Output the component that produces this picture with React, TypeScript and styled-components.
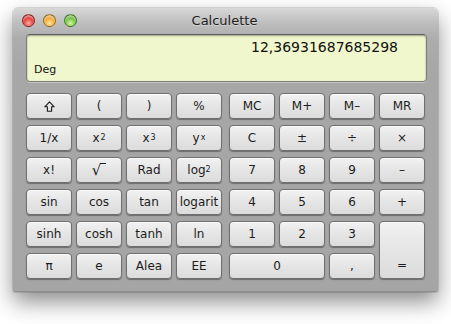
import React from "react";
import styled, { createGlobalStyle, css } from "styled-components";

const Global = createGlobalStyle`
  html, body { margin: 0; padding: 0; background: #ffffff; }
  body { font-family: "DejaVu Sans", "Liberation Sans", sans-serif; }
`;

const Page = styled.div`
  padding: 8px 0 0 13px;
  width: 451px;
  height: 324px;
  box-sizing: border-box;
`;

const Window = styled.div`
  width: 425px;
  height: 284px;
  box-sizing: border-box;
  border-radius: 5px 5px 2px 2px;
  background: linear-gradient(#d8d8d8 0px, #bfbfbf 14px, #adadad 30px, #a7a7a7 60px, #a5a5a5 100%);
  box-shadow: 0 10px 22px rgba(0, 0, 0, 0.45), 0 0 0 1px rgba(0, 0, 0, 0.12);
  border-bottom: 1px solid #8e8e8e;
  display: flex;
  flex-direction: column;
  padding: 0 11px 0 13px;
`;

const TitleBar = styled.div`
  height: 26px;
  display: grid;
  grid-template-columns: 1fr auto 1fr;
  align-items: center;
  margin-left: -4px;
`;

const Lights = styled.div`
  display: flex;
  gap: 8px;
  margin-top: -2px;
`;

const lightColors = {
  red: ["#ffb0a8", "#e0312a", "#a6100b"],
  yellow: ["#ffe7a0", "#f2a62a", "#b8700c"],
  green: ["#d8f7a8", "#66be34", "#3c8318"],
};

const Light = styled.span<{ $c: keyof typeof lightColors }>`
  width: 13px;
  height: 13px;
  border-radius: 50%;
  box-sizing: border-box;
  border: 1px solid rgba(0, 0, 0, 0.35);
  ${({ $c }) => css`
    background: radial-gradient(circle at 50% 75%, ${lightColors[$c][0]} 0%, ${lightColors[$c][1]} 55%, ${lightColors[$c][2]} 100%);
  `}
  box-shadow: inset 0 2px 2px rgba(255, 255, 255, 0.55);
`;

const Title = styled.div`
  font-size: 13px;
  color: #1a1a1a;
  margin-top: -2px;
  text-shadow: 0 1px 0 rgba(255, 255, 255, 0.4);
`;

const Display = styled.div`
  height: 48px;
  box-sizing: border-box;
  width: 401px;
  border-radius: 4px;
  background: #f0f7cc;
  border: 1px solid #7c7c7c;
  border-top-color: #5e5e5e;
  box-shadow: inset 0 1px 2px rgba(0, 0, 0, 0.35), 0 1px 0 rgba(255, 255, 255, 0.35);
  display: flex;
  flex-direction: column;
  justify-content: space-between;
  padding: 3px 28px 4px 7px;
`;

const Value = styled.div`
  align-self: flex-end;
  font-size: 14px;
  color: #111;
  line-height: 18px;
`;

const Mode = styled.div`
  font-size: 11px;
  color: #111;
  line-height: 14px;
`;

const Keypad = styled.div`
  display: flex;
  gap: 7px;
  margin-top: 11px;
`;

const Grid = styled.div`
  display: grid;
  grid-template-columns: repeat(4, 46px);
  grid-template-rows: repeat(6, 26px);
  column-gap: 4px;
  row-gap: 6px;
`;

const Key = styled.div<{ $wide?: boolean; $tall?: boolean }>`
  box-sizing: border-box;
  border: 1px solid #6f6f6f;
  border-radius: 4px;
  background: linear-gradient(#f2f2f2 0%, #e6e6e6 45%, #dcdcdc 100%);
  box-shadow: 0 1px 1px rgba(0, 0, 0, 0.35), inset 0 1px 0 rgba(255, 255, 255, 0.8);
  display: flex;
  align-items: center;
  justify-content: center;
  font-size: 12px;
  color: #1c1c1c;
  white-space: nowrap;
  ${({ $wide }) => $wide && css`grid-column: span 2;`}
  ${({ $tall }) => $tall && css`
    grid-row: span 2;
    align-items: flex-end;
    padding-bottom: 6px;
  `}
`;

const Sup = styled.sup`
  font-size: 8px;
  vertical-align: 6px;
  line-height: 0;
  margin-left: 1px;
`;

const Sub = styled.sub`
  font-size: 8px;
  vertical-align: -3px;
  line-height: 0;
`;

const Root = styled.span`
  display: inline-flex;
  align-items: flex-start;
  font-size: 15px;
`;

const RootBar = styled.span`
  display: inline-block;
  width: 6px;
  border-top: 1px solid #1c1c1c;
  margin-top: 2px;
  margin-left: -1px;
  height: 10px;
`;

const ShiftIcon = () => (
  <svg width="11" height="11" viewBox="0 0 11 11">
    <path
      d="M5.5 0.8 L10.2 5.8 L7.6 5.8 L7.6 10.2 L3.4 10.2 L3.4 5.8 L0.8 5.8 Z"
      fill="none"
      stroke="#1c1c1c"
      strokeWidth="1.1"
      strokeLinejoin="round"
    />
  </svg>
);

type K = { label: React.ReactNode; wide?: boolean; tall?: boolean };

const left: K[] = [
  { label: <ShiftIcon /> }, { label: "(" }, { label: ")" }, { label: "%" },
  { label: "1/x" }, { label: <>x<Sup>2</Sup></> }, { label: <>x<Sup>3</Sup></> }, { label: <>y<Sup>x</Sup></> },
  { label: "x!" }, { label: <Root>√<RootBar /></Root> }, { label: "Rad" }, { label: <>log<Sub>2</Sub></> },
  { label: "sin" }, { label: "cos" }, { label: "tan" }, { label: "logarit" },
  { label: "sinh" }, { label: "cosh" }, { label: "tanh" }, { label: "ln" },
  { label: "π" }, { label: "e" }, { label: "Alea" }, { label: "EE" },
];

const right: K[] = [
  { label: "MC" }, { label: "M+" }, { label: "M–" }, { label: "MR" },
  { label: "C" }, { label: "±" }, { label: "÷" }, { label: "×" },
  { label: "7" }, { label: "8" }, { label: "9" }, { label: "–" },
  { label: "4" }, { label: "5" }, { label: "6" }, { label: "+" },
  { label: "1" }, { label: "2" }, { label: "3" }, { label: "=", tall: true },
  { label: "0", wide: true }, { label: "," },
];

export default function App() {
  return (
    <Page>
      <Global />
      <Window>
        <TitleBar>
          <Lights>
            <Light $c="red" />
            <Light $c="yellow" />
            <Light $c="green" />
          </Lights>
          <Title>Calculette</Title>
          <span />
        </TitleBar>
        <Display>
          <Value>12,36931687685298</Value>
          <Mode>Deg</Mode>
        </Display>
        <Keypad>
          <Grid>
            {left.map((k, i) => (
              <Key key={i}>{k.label}</Key>
            ))}
          </Grid>
          <Grid>
            {right.map((k, i) => (
              <Key key={i} $wide={k.wide} $tall={k.tall}>{k.label}</Key>
            ))}
          </Grid>
        </Keypad>
      </Window>
    </Page>
  );
}
